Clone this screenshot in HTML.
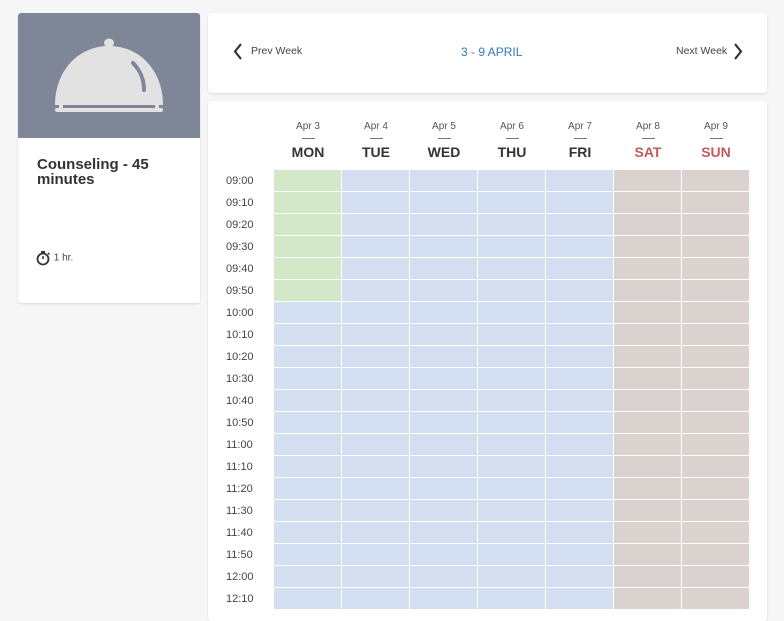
<!DOCTYPE html><html><head><style>
body{margin:0;background:#f6f6f6;font-family:"Liberation Sans",sans-serif;width:784px;height:599px;overflow:hidden;position:relative}
.card{position:absolute;background:#fff;border-radius:3px;box-shadow:0 1px 2px rgba(0,0,0,.12)}
.lbl{position:absolute;font-size:11px;color:#444}
.day{position:absolute;width:68px;text-align:center}
.day .d{font-size:10px;color:#555}
.day .l{width:13px;height:1px;background:#777;margin:6px auto 5px}
.day .n{font-size:14px;font-weight:bold;color:#333}
.cell{position:absolute;width:67px;height:21px}
</style></head><body>
<div class="card" style="left:18px;top:13px;width:182px;height:290px;overflow:hidden">
<div style="height:125px;background:#7f8698;position:relative">
<svg width="182" height="125" viewBox="0 0 182 125"><g fill="#e2e2e2"><ellipse cx="91" cy="30" rx="5" ry="4.5"/><path d="M37 92 C37 58 60 33 91 33 C122 33 145 58 145 92 Z"/><rect x="37" y="95" width="108" height="4" rx="2"/><rect x="41" y="90" width="4" height="7"/><rect x="137" y="90" width="4" height="7"/></g><rect x="45" y="92" width="92" height="3" fill="#7f8698"/><path d="M115 50 A38 38 0 0 1 126 77" stroke="#7f8698" stroke-width="4" fill="none" stroke-linecap="round"/></svg>
</div>
<div style="position:absolute;left:19px;top:144px;font-size:15px;font-weight:bold;color:#333;line-height:15px">Counseling - 45<br>minutes</div>
<div style="position:absolute;left:18px;top:237px;font-size:10px;color:#444"><svg width="15" height="16" viewBox="0 0 15 16" style="vertical-align:middle"><circle cx="7" cy="9" r="5.5" fill="none" stroke="#333" stroke-width="1.8"/><rect x="5" y="1" width="4" height="2" fill="#333"/><path d="M7 9V6" stroke="#333" stroke-width="1.5"/><path d="M12 3l1.5 1.5" stroke="#333" stroke-width="1.5"/></svg> 1 hr.</div>
</div>
<div class="card" style="left:208px;top:13px;width:559px;height:80px">
<svg style="position:absolute;left:25px;top:30px" width="10" height="17"><path d="M8 1L2 8.5 8 16" stroke="#333" stroke-width="2.2" fill="none"/></svg>
<div style="position:absolute;left:43px;top:32px;font-size:10.5px;color:#444">Prev Week</div>
<div style="position:absolute;left:253px;top:32px;font-size:12px;color:#2f7ab8">3 - 9 APRIL</div>
<div style="position:absolute;left:468px;top:32px;font-size:10.5px;color:#444">Next Week</div>
<svg style="position:absolute;left:525px;top:30px" width="10" height="17"><path d="M2 1L8 8.5 2 16" stroke="#333" stroke-width="2.2" fill="none"/></svg>
</div>
<div class="card" style="left:208px;top:101px;width:559px;height:520px"></div>
<div id="g"></div>
<script>
var days=[["Apr 3","MON"],["Apr 4","TUE"],["Apr 5","WED"],["Apr 6","THU"],["Apr 7","FRI"],["Apr 8","SAT"],["Apr 9","SUN"]];
var h="";
days.forEach(function(d,i){var x=274+i*68;h+='<div class="day" style="left:'+x+'px;top:121px"><div class="d">'+d[0]+'</div><div class="l"></div><div class="n" style="color:'+(i>4?'#c45a5a':'#333')+'">'+d[1]+'</div></div>';});
for(var r=0;r<20;r++){var y=170+r*22;var hh=9+Math.floor(r/6),mm=(r%6)*10;var t=(hh<10?'0':'')+hh+':'+(mm?mm:'00');
h+='<div class="lbl" style="left:226px;top:'+(y+5)+'px">'+t+'</div>';
for(var i=0;i<7;i++){var c=i>4?'#d9d2cf':(i==0&&r<6?'#d2e8c8':'#d3dff0');h+='<div class="cell" style="left:'+(274+i*68)+'px;top:'+y+'px;background:'+c+'"></div>';}}
document.getElementById('g').innerHTML=h;
</script>
</body></html>
